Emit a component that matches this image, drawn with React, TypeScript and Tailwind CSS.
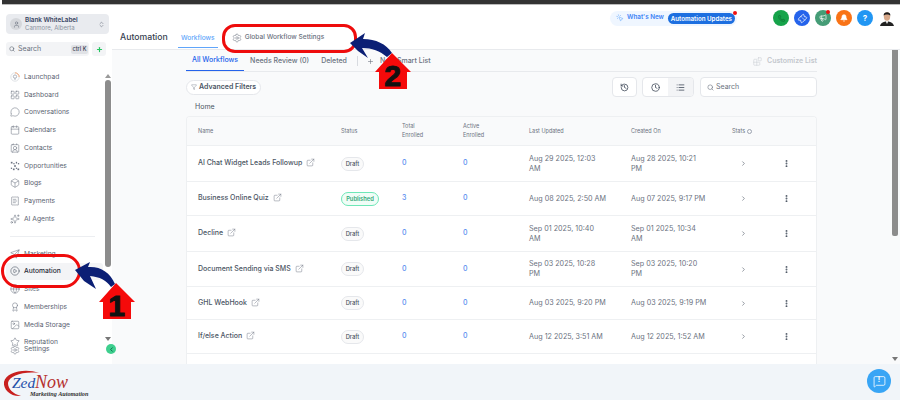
import {
  Award, Blocks, Box, Calendar, ChevronLeft, ChevronRight, ChevronsUpDown, Clock, ContactRound,
  ExternalLink, Filter, Globe, History, Image, LayoutGrid, List, MessageCircle, MoreVertical, Phone,
  Megaphone, Bell, Plus, ReceiptText, Search, Send, Settings, Star, Ticket, User, CirclePlay, Sparkles, MessageSquare,
  MousePointerClick,
} from "lucide-react";

function LaunchpadIcon({ className }: { className?: string }) {
  return (
    <svg viewBox="0 0 12 12" fill="none" className={className}>
      <circle cx="6" cy="6" r="5" stroke="#d9dce1" strokeWidth="1" />
      <path d="M6 1 A5 5 0 0 1 11 6" stroke="#f59e66" strokeWidth="1" />
      <circle cx="6" cy="5.5" r="2" stroke="#8b93a1" strokeWidth="0.8" />
      <path d="M5 8.5 H7" stroke="#8b93a1" strokeWidth="0.8" />
    </svg>
  );
}

function OpportunitiesIcon({ className }: { className?: string }) {
  return (
    <svg viewBox="0 0 12 12" fill="#6b7280" className={className}>
      <rect x="1" y="1" width="2" height="2" />
      <rect x="4" y="2.5" width="1.5" height="1.5" />
      <rect x="7" y="1" width="1.5" height="2" />
      <rect x="9.5" y="2.5" width="1.5" height="1.5" />
      <rect x="1" y="8" width="1.5" height="1.5" />
      <rect x="3.5" y="9" width="2" height="2" />
      <rect x="7" y="8" width="1.5" height="1.5" />
      <rect x="9" y="9" width="2" height="2" />
      <rect x="5" y="5" width="2" height="2" />
    </svg>
  );
}

const navTop = [
  { label: "Launchpad", icon: LaunchpadIcon },
  { label: "Dashboard", icon: LayoutGrid },
  { label: "Conversations", icon: MessageCircle },
  { label: "Calendars", icon: Calendar },
  { label: "Contacts", icon: ContactRound },
  { label: "Opportunities", icon: OpportunitiesIcon },
  { label: "Blogs", icon: Box },
  { label: "Payments", icon: ReceiptText },
  { label: "AI Agents", icon: Sparkles },
];

const navBottom = [
  { label: "Marketing", icon: Send },
  { label: "Automation", icon: CirclePlay, active: true },
  { label: "Sites", icon: Globe },
  { label: "Memberships", icon: Award },
  { label: "Media Storage", icon: Image },
];

const rows = [
  { name: "AI Chat Widget Leads Followup", status: "Draft", total: 0, updated: "Aug 29 2025, 12:03\nAM", created: "Aug 28 2025, 10:21\nPM", h: "h-[36px]" },
  { name: "Business Online Quiz", status: "Published", total: 3, updated: "Aug 08 2025, 2:50 AM", created: "Aug 07 2025, 9:17 PM", h: "h-[34px]" },
  { name: "Decline", status: "Draft", total: 0, updated: "Sep 01 2025, 10:40\nAM", created: "Sep 01 2025, 10:34\nAM", h: "h-[36px]" },
  { name: "Document Sending via SMS", status: "Draft", total: 0, updated: "Sep 03 2025, 10:28\nPM", created: "Sep 03 2025, 10:20\nPM", h: "h-[35px]" },
  { name: "GHL WebHook", status: "Draft", total: 0, updated: "Aug 03 2025, 9:20 PM", created: "Aug 03 2025, 9:19 PM", h: "h-[33px]" },
  { name: "If/else Action", status: "Draft", total: 0, updated: "Aug 12 2025, 3:51 AM", created: "Aug 12 2025, 1:52 AM", h: "h-[34px]" },
];

const grid = "grid grid-cols-[143px_61px_61px_66px_102px_101px_55px_1fr] items-center pl-[11px]";

function HouseBadge({ n, className }: { n: string; className: string }) {
  return (
    <div className={`absolute w-[36px] h-[36px] ${className}`}>
      <svg viewBox="0 0 36 36" className="absolute inset-0 w-full h-full">
        <path d="M17 0 L36 19 L32 19 L32 36 L4 36 L4 19 L0 19 Z" fill="#f50a0a" />
      </svg>
      <span className="absolute inset-0 top-[9px] left-[-1px] flex items-center justify-center font-['Liberation_Sans'] font-bold text-[30px] leading-none text-[#111] [-webkit-text-stroke:1px_#111]">
        {n}
      </span>
    </div>
  );
}

export default function App() {
  return (
    <div className="relative w-[900px] h-[400px] overflow-hidden bg-white font-['Inter',sans-serif] flex flex-col">
      <div className="h-[5px] shrink-0 ml-[2px] bg-[#333333] border-b border-[#bbbbbb]" />

      <div className="flex flex-1 min-h-0">
        {/* Sidebar */}
        <aside className="relative w-[112px] shrink-0 bg-white pt-[9px] px-[6px] flex flex-col">
          <div className="flex items-center h-[20px] w-[103px] rounded-[4px] bg-[#e9ebef] px-[4px] gap-[3px]">
            <div className="w-[12px] h-[12px] rounded-full bg-[#d5d7db] flex items-center justify-center">
              <User className="w-[7px] h-[7px] text-[#6b7280]" />
            </div>
            <div className="flex-1 leading-none">
              <div className="text-[6.3px] font-semibold text-[#374462] mb-[1px]">Blank WhiteLabel</div>
              <div className="text-[6px] text-[#8b93a1]">Canmore, Alberta</div>
            </div>
            <ChevronsUpDown className="w-[7px] h-[7px] text-[#6b7280]" />
          </div>

          <div className="flex gap-[3px] mt-[8px]">
            <div className="flex items-center w-[86px] h-[14px] rounded-[3px] bg-[#f3f4f6] pl-[3px] pr-[1px]">
              <Search className="w-[6px] h-[6px] text-[#4b5563]" />
              <span className="ml-[3px] text-[7px] text-[#6b7280] flex-1">Search</span>
              <span className="bg-[#e0e2e6] rounded-[2px] px-[2px] text-[5.5px] font-medium text-[#374151] leading-[9px]">ctrl K</span>
            </div>
            <div className="w-[14px] h-[14px] rounded-[3px] bg-[#f3f4f6] flex items-center justify-center">
              <Plus strokeWidth={4} className="w-[7px] h-[7px] text-[#22c55e]" />
            </div>
          </div>

          <nav className="mt-[12px] flex flex-col">
            {navTop.map((item) => (
              <div key={item.label} className="flex items-center h-[17.75px] pl-[4px] gap-[4px]">
                <item.icon strokeWidth={1.25} className="w-[10px] h-[10px] text-[#6b7280]" />
                <span className="text-[6.7px] text-[#5b6472]">{item.label}</span>
              </div>
            ))}
          </nav>

          <div className="h-px bg-[#eceef1] mt-[8px] mb-[8px] ml-[4px] w-[85px]" />

          <nav className="flex flex-col">
            {navBottom.map((item) => (
              <div
                key={item.label}
                className={`flex items-center h-[17.75px] pl-[4px] gap-[4px] rounded-[3px] ${item.active ? "bg-[#f3f4f6] w-[97px]" : ""}`}
              >
                <item.icon strokeWidth={1.25} className={`w-[10px] h-[10px] ${item.active ? "text-[#374151]" : "text-[#6b7280]"}`} />
                <span className={`text-[6.7px] ${item.active ? "text-[#1f2937] font-medium" : "text-[#5b6472]"}`}>{item.label}</span>
              </div>
            ))}
            <div className="flex items-center h-[17px] pl-[4px] gap-[4px]">
              <Star strokeWidth={1.25} className="w-[10px] h-[10px] text-[#6b7280]" />
              <span className="text-[6.7px] text-[#5b6472]">Reputation</span>
            </div>
            <div className="flex items-center h-[8px] pl-[4px] gap-[4px] -mt-[8px] translate-y-[3px]">
              <Settings strokeWidth={1.25} className="w-[10px] h-[10px] text-[#6b7280]" />
              <span className="text-[6.7px] text-[#5b6472]">Settings</span>
            </div>
          </nav>

          {/* sidebar scrollbar */}
          <div className="absolute left-[105px] top-[69px] w-0 h-0 border-x-[3px] border-x-transparent border-b-[4px] border-b-[#9a9a9a]" />
          <div className="absolute left-[105px] top-[75px] w-[6px] h-[187px] rounded-full bg-[#8c8c8c]" />
          <div className="absolute left-[105px] top-[332px] w-0 h-0 border-x-[3px] border-x-transparent border-t-[4px] border-t-[#777777]" />
          <div className="absolute left-[106px] top-[339px] w-[10px] h-[10px] rounded-full bg-[#3ecf8e] flex items-center justify-center z-10">
            <ChevronLeft strokeWidth={3} className="w-[7px] h-[7px] text-[#065f46]" />
          </div>
        </aside>

        {/* Main */}
        <main className="relative flex-1 min-w-0 flex flex-col bg-[#f9fafb]">
          <header className="h-[45px] shrink-0 bg-white border-b border-[#e8eaed] flex items-start pl-[8px]">
            <span className="mt-[26px] text-[8.7px] font-medium text-[#374151] leading-[12px]">Automation</span>
            <div className="mt-[27px] ml-[10px] h-[16px] w-[40px] border-b border-[#60a5fa] text-center text-[6.6px] font-medium text-[#60a5fa] leading-[12px]">
              Workflows
            </div>
            <div className="mt-[27px] ml-[14px] flex items-center gap-[3px] h-[12px]">
              <Settings strokeWidth={1.25} className="w-[10px] h-[10px] text-[#6b7280]" />
              <span className="text-[6.6px] font-medium text-[#6b7280]">Global Workflow Settings</span>
            </div>

            <div className="ml-auto mt-[5px] mr-[5px] flex items-center">
              <div className="relative flex items-center h-[15px] w-[127px] rounded-full bg-[#eff6ff] pl-[6px] pr-[1px]">
                <MousePointerClick strokeWidth={1.5} className="w-[8px] h-[8px] text-[#60a5fa]" />
                <span className="ml-[3px] text-[6.3px] font-semibold text-[#3b82f6]">What's New</span>
                <span className="ml-auto h-[11px] px-[3px] rounded-full bg-[#1d6fe0] text-white text-[6.2px] font-semibold leading-[11px] mr-[1px]">
                  Automation Updates
                </span>
                <span className="absolute right-[0px] -top-[0px] w-[4px] h-[4px] rounded-full bg-[#ef1010]" />
              </div>

              <div className="ml-[36px] flex items-center gap-[5px]">
                <div className="w-[16px] h-[16px] rounded-full bg-[#16a34a] flex items-center justify-center">
                  <Phone className="w-[7px] h-[7px] text-[#0f6b32]" />
                </div>
                <div className="w-[16px] h-[16px] rounded-full bg-[#2563eb] flex items-center justify-center">
                  <Ticket className="w-[9px] h-[9px] text-white -rotate-45" />
                </div>
                <div className="relative w-[16px] h-[16px] rounded-full bg-[#459c76] flex items-center justify-center">
                  <Megaphone className="w-[8px] h-[8px] text-white" />
                  <span className="absolute right-[1px] top-0 w-[4px] h-[4px] rounded-full bg-[#ef1010]" />
                </div>
                <div className="w-[16px] h-[16px] rounded-full bg-[#f97316] flex items-center justify-center">
                  <Bell fill="white" className="w-[8px] h-[8px] text-white" />
                </div>
                <div className="w-[16px] h-[16px] rounded-full bg-[#2196f3] flex items-center justify-center text-white text-[8px] font-bold">?</div>
                <svg viewBox="0 0 16 16" className="w-[16px] h-[16px] ml-[1px]">
                  <path d="M1 16 C2 12 5 12 8 11 C11 12 14 12 15 16 Z" fill="#222" />
                  <path d="M6.5 11 L8 14 L9.5 11 Z" fill="#eee" />
                  <ellipse cx="8" cy="6.5" rx="3.2" ry="4.2" fill="#d9a98a" />
                  <path d="M4.6 5.5 C4.4 1.5 11.6 1 11.4 5.5 C10 4 6 4 4.6 5.5 Z" fill="#1c1c1c" />
                </svg>
              </div>
            </div>
          </header>

          <div className="flex-1 min-h-0 pl-[74px] pr-[83px] flex flex-col overflow-hidden">
            {/* Sub tabs */}
            <div className="flex items-center h-[22px] shrink-0 border-b border-[#e8eaed] text-[7px] font-medium text-[#6b7280] pt-[1px]">
              <div className="h-full flex items-center px-[6px] border-b border-[#2563eb] text-[#2563eb]">All Workflows</div>
              <span className="ml-[6px]">Needs Review (0)</span>
              <span className="ml-[12px]">Deleted</span>
              <span className="ml-[10px] w-px h-[10px] bg-[#d8dbe0]" />
              <Plus className="ml-[9px] w-[7px] h-[7px]" />
              <span className="ml-[6px]">New Smart List</span>
              <div className="ml-auto flex items-center gap-[5px] text-[#c3c7cd] font-semibold">
                <Blocks strokeWidth={1.25} className="w-[9px] h-[9px]" />
                <span>Customize List</span>
              </div>
            </div>

            {/* Toolbar */}
            <div className="flex items-center mt-[5px] shrink-0">
              <div className="flex items-center h-[15px] rounded-full border border-[#e5e7eb] bg-white px-[4px] gap-[2px]">
                <Filter strokeWidth={1.25} className="w-[6px] h-[6px] text-[#4b5563]" />
                <span className="text-[7px] font-semibold text-[#4b5563]">Advanced Filters</span>
              </div>
              <div className="ml-auto w-[25px] h-[20px] rounded-[4px] border border-[#e5e7eb] bg-white flex items-center justify-center">
                <History className="w-[9px] h-[9px] text-[#374151]" />
              </div>
              <div className="ml-[5px] w-[52px] h-[20px] rounded-[4px] border border-[#e5e7eb] bg-white flex overflow-hidden">
                <div className="flex-1 flex items-center justify-center">
                  <Clock className="w-[9px] h-[9px] text-[#374151]" />
                </div>
                <div className="flex-1 flex items-center justify-center bg-[#f3f4f6]">
                  <List className="w-[9px] h-[9px] text-[#374151]" />
                </div>
              </div>
              <div className="ml-[6px] w-[117px] h-[20px] rounded-[4px] border border-[#e5e7eb] bg-white flex items-center pl-[6px] gap-[2px]">
                <Search className="w-[7px] h-[7px] text-[#6b7280]" />
                <span className="text-[7px] text-[#6b7280]">Search</span>
              </div>
            </div>

            <div className="mt-[5px] pl-[9px] shrink-0 text-[7px] text-[#4b5563] leading-[10px]">Home</div>

            {/* Table */}
            <div className="mt-[4px] rounded-t-[4px] border border-b-0 border-[#eef0f2] bg-white flex-1 min-h-0 text-[7px] overflow-hidden">
              <div className={`${grid} h-[29px] bg-[#f9fafb] border-b border-[#eef0f2] text-[5.5px] text-[#6b7280]`}>
                <span>Name</span>
                <span>Status</span>
                <span className="leading-[9px]">Total<br />Enrolled</span>
                <span className="leading-[9px]">Active<br />Enrolled</span>
                <span>Last Updated</span>
                <span>Created On</span>
                <span className="flex items-center gap-[2px]">Stats <span className="w-[5px] h-[5px] rounded-full border-[0.5px] border-[#9ca3af]" /></span>
                <span />
              </div>
              {rows.map((r) => (
                <div key={r.name} className={`${grid} ${r.h} border-b border-[#eef0f2]`}>
                  <div className="flex items-center gap-[4px]">
                    <span className="font-medium text-[#4b5563] whitespace-nowrap">{r.name}</span>
                    <ExternalLink strokeWidth={1.25} className="w-[9px] h-[9px] text-[#6b7280] -mt-[2px]" />
                  </div>
                  <div>
                    {r.status === "Draft" ? (
                      <span className="inline-block h-[14px] w-[23px] rounded-full border border-[#e5e7eb] bg-[#fafafa] text-center text-[5.8px] font-medium leading-[12px] text-[#4b5563]">
                        Draft
                      </span>
                    ) : (
                      <span className="inline-block h-[14px] w-[38px] rounded-full border border-[#6ee7b7] bg-[#f0fdf7] text-center text-[5.8px] font-semibold leading-[12px] text-[#34a877]">
                        Published
                      </span>
                    )}
                  </div>
                  <span className="font-medium text-[#5b8def]">{r.total}</span>
                  <span className="font-medium text-[#5b8def]">0</span>
                  <span className="whitespace-pre-line leading-[10px] text-[#6b7280] text-[7.2px]">{r.updated}</span>
                  <span className="whitespace-pre-line leading-[10px] text-[#6b7280] text-[7.2px]">{r.created}</span>
                  <span className="pl-[8px]"><ChevronRight className="w-[7px] h-[7px] text-[#4b5563]" /></span>
                  <span className="-ml-[5px]"><MoreVertical strokeWidth={3} className="w-[9px] h-[9px] text-[#4b5563]" /></span>
                </div>
              ))}
            </div>
          </div>

          {/* page scrollbar */}
          <div className="absolute right-[2px] top-[45px] w-[6px] h-[186px] rounded-b-[2px] bg-[#8c8c8c]" />
          <div className="absolute right-[2px] top-[352px] w-0 h-0 border-x-[3px] border-x-transparent border-t-[4px] border-t-[#777777]" />
        </main>
      </div>

      {/* Footer band */}
      <footer className="h-[36px] shrink-0 bg-[#f1f5f9] flex items-center justify-between pl-[3px] pr-[9px]">
        <div className="relative w-[92px] h-[36px]">
          <svg viewBox="0 0 40 36" className="absolute left-0 top-0 w-[40px] h-[36px]">
            <path d="M36 9 C22 4 3 8 1 18 C0 26 8 33 18 32 C10 30 5 25 5 19 C6 12 20 7 36 9 Z" fill="#c8201f" />
          </svg>
          <span className="absolute left-[9px] top-[11px] font-['Liberation_Serif'] italic text-[15.5px] leading-[15px] text-[#1d4fa8]">Zed</span>
          <span className="absolute left-[32px] top-[10px] font-['Liberation_Serif'] italic text-[18px] leading-[16px] text-[#b5302e]">Now</span>
          <span className="absolute left-[27px] top-[26px] font-['Liberation_Serif'] italic font-bold text-[6.2px] leading-[8px] text-[#333]">Marketing Automation</span>
        </div>
        <div className="w-[24px] h-[24px] mb-[2px] rounded-full bg-[#38a5f5] flex items-center justify-center relative">
          <MessageSquare strokeWidth={1.5} className="w-[13px] h-[13px] text-white" />
          <span className="absolute text-white text-[7px] font-bold leading-none top-[7px]">!</span>
        </div>
      </footer>

      {/* Annotations */}
      <div className="absolute left-[1px] top-[254px] w-[80px] h-[34px] rounded-[17px] border-[3px] border-[#ee0c0c]" />
      <div className="absolute left-[222px] top-[24px] w-[135px] h-[29px] rounded-[13px] border-[3px] border-[#ee0c0c]" />

      <svg viewBox="0 0 900 400" className="absolute inset-0 w-[900px] h-[400px] pointer-events-none">
        <path d="M75 270 L90 262 L88 267 C100 266 110 272 115 284 L111 287 C106 280 100 277 90 276 L96 289 L84 281 Z" fill="#0b1f75" />
        <path d="M350 43 L365 33 L363 39 C376 39 386 44 392 53 L387 57 C380 51 372 48 362 48 L368 58 L358 51 Z" fill="#0b1f75" />
      </svg>

      <HouseBadge n="1" className="left-[99px] top-[283px]" />
      <HouseBadge n="2" className="left-[375px] top-[53px]" />
    </div>
  );
}
